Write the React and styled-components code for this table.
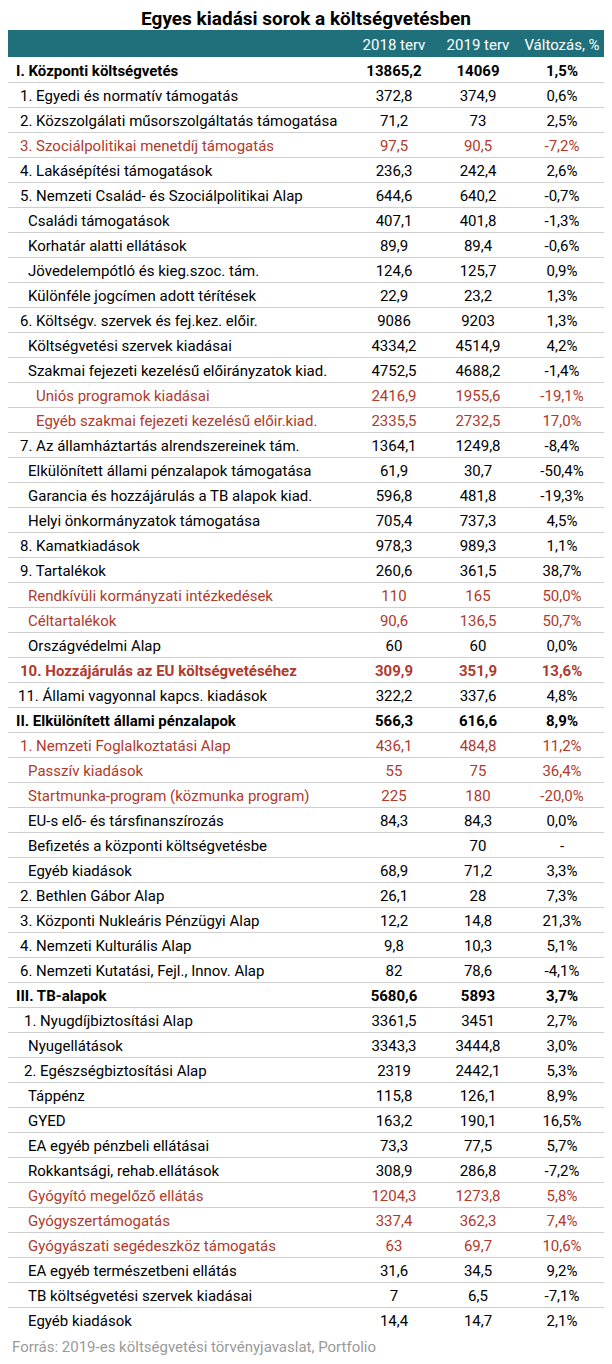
import React from 'react';
import styled, { createGlobalStyle } from 'styled-components';

const COLORS = {
  TEAL: '#20707b',
  RED: '#b03a2c',
  LINE: '#cfcfcf',
  GREY: '#9a9a9a',
};

// label, 2018, 2019, change, indent, variant (b = bold, r = red, rb = red bold)
const ROWS = [
  ['I. Központi költségvetés', '13865,2', '14069', '1,5%', 0, 'b'],
  ['1. Egyedi és normatív támogatás', '372,8', '374,9', '0,6%', 4],
  ['2. Közszolgálati műsorszolgáltatás támogatása', '71,2', '73', '2,5%', 4],
  ['3. Szociálpolitikai menetdíj támogatás', '97,5', '90,5', '-7,2%', 4, 'r'],
  ['4. Lakásépítési támogatások', '236,3', '242,4', '2,6%', 4],
  ['5. Nemzeti Család- és Szociálpolitikai Alap', '644,6', '640,2', '-0,7%', 4],
  ['Családi támogatások', '407,1', '401,8', '-1,3%', 12],
  ['Korhatár alatti ellátások', '89,9', '89,4', '-0,6%', 12],
  ['Jövedelempótló és kieg.szoc. tám.', '124,6', '125,7', '0,9%', 12],
  ['Különféle jogcímen adott térítések', '22,9', '23,2', '1,3%', 12],
  ['6. Költségv. szervek és fej.kez. előir.', '9086', '9203', '1,3%', 4],
  ['Költségvetési szervek kiadásai', '4334,2', '4514,9', '4,2%', 12],
  ['Szakmai fejezeti kezelésű előirányzatok kiad.', '4752,5', '4688,2', '-1,4%', 12],
  ['Uniós programok kiadásai', '2416,9', '1955,6', '-19,1%', 20, 'r'],
  ['Egyéb szakmai fejezeti kezelésű előir.kiad.', '2335,5', '2732,5', '17,0%', 20, 'r'],
  ['7. Az államháztartás alrendszereinek tám.', '1364,1', '1249,8', '-8,4%', 4],
  ['Elkülönített állami pénzalapok támogatása', '61,9', '30,7', '-50,4%', 12],
  ['Garancia és hozzájárulás a TB alapok kiad.', '596,8', '481,8', '-19,3%', 12],
  ['Helyi önkormányzatok támogatása', '705,4', '737,3', '4,5%', 12],
  ['8. Kamatkiadások', '978,3', '989,3', '1,1%', 4],
  ['9. Tartalékok', '260,6', '361,5', '38,7%', 4],
  ['Rendkívüli kormányzati intézkedések', '110', '165', '50,0%', 12, 'r'],
  ['Céltartalékok', '90,6', '136,5', '50,7%', 12, 'r'],
  ['Országvédelmi Alap', '60', '60', '0,0%', 12],
  ['10. Hozzájárulás az EU költségvetéséhez', '309,9', '351,9', '13,6%', 4, 'rb'],
  ['11. Állami vagyonnal kapcs. kiadások', '322,2', '337,6', '4,8%', 2],
  ['II. Elkülönített állami pénzalapok', '566,3', '616,6', '8,9%', 0, 'b'],
  ['1. Nemzeti Foglalkoztatási Alap', '436,1', '484,8', '11,2%', 4, 'r'],
  ['Passzív kiadások', '55', '75', '36,4%', 12, 'r'],
  ['Startmunka-program (közmunka program)', '225', '180', '-20,0%', 12, 'r'],
  ['EU-s elő- és társfinanszírozás', '84,3', '84,3', '0,0%', 12],
  ['Befizetés a központi költségvetésbe', '', '70', '-', 12],
  ['Egyéb kiadások', '68,9', '71,2', '3,3%', 12],
  ['2. Bethlen Gábor Alap', '26,1', '28', '7,3%', 4],
  ['3. Központi Nukleáris Pénzügyi Alap', '12,2', '14,8', '21,3%', 4],
  ['4. Nemzeti Kulturális Alap', '9,8', '10,3', '5,1%', 4],
  ['6. Nemzeti Kutatási, Fejl., Innov. Alap', '82', '78,6', '-4,1%', 4],
  ['III. TB-alapok', '5680,6', '5893', '3,7%', 0, 'b'],
  ['1. Nyugdíjbiztosítási Alap', '3361,5', '3451', '2,7%', 8],
  ['Nyugellátások', '3343,3', '3444,8', '3,0%', 12],
  ['2. Egészségbiztosítási Alap', '2319', '2442,1', '5,3%', 8],
  ['Táppénz', '115,8', '126,1', '8,9%', 12],
  ['GYED', '163,2', '190,1', '16,5%', 12],
  ['EA egyéb pénzbeli ellátásai', '73,3', '77,5', '5,7%', 12],
  ['Rokkantsági, rehab.ellátások', '308,9', '286,8', '-7,2%', 12],
  ['Gyógyító megelőző ellátás', '1204,3', '1273,8', '5,8%', 12, 'r'],
  ['Gyógyszertámogatás', '337,4', '362,3', '7,4%', 12, 'r'],
  ['Gyógyászati segédeszköz támogatás', '63', '69,7', '10,6%', 12, 'r'],
  ['EA egyéb természetbeni ellátás', '31,6', '34,5', '9,2%', 12],
  ['TB költségvetési szervek kiadásai', '7', '6,5', '-7,1%', 12],
  ['Egyéb kiadások', '14,4', '14,7', '2,1%', 12],
];

const GlobalStyle = createGlobalStyle`
  body {
    margin: 0;
    background: #fff;
    font-family: Roboto, "Liberation Sans", sans-serif;
    color: #000;
  }
`;

const App = () => (
  <Page>
    <GlobalStyle />
    <Title>Egyes kiadási sorok a költségvetésben</Title>
    <Table>
      <colgroup>
        <col />
        <col style={{ width: 84 }} />
        <col style={{ width: 84 }} />
        <col style={{ width: 84 }} />
      </colgroup>
      <thead>
        <tr>
          <HeadCell />
          <HeadCell>2018 terv</HeadCell>
          <HeadCell>2019 terv</HeadCell>
          <HeadCell>Változás, %</HeadCell>
        </tr>
      </thead>
      <tbody>
        {ROWS.map(([label, a, b, c, indent, variant], i) => (
          <Row key={i} $variant={variant}>
            <Label $indent={indent}>{label}</Label>
            <Num>{a}</Num>
            <Num>{b}</Num>
            <Num>{c}</Num>
          </Row>
        ))}
      </tbody>
    </Table>
    <Source>Forrás: 2019-es költségvetési törvényjavaslat, Portfolio</Source>
  </Page>
);

export default App;

const Page = styled.div`
  width: 596px;
  padding: 0 8px;
`;

const Title = styled.h1`
  margin: 0;
  height: 30px;
  line-height: 37px;
  text-align: center;
  font-size: 19px;
  font-weight: 700;
`;

const Table = styled.table`
  width: 596px;
  border-collapse: collapse;
  table-layout: fixed;
  font-size: 15px;
`;

const HeadCell = styled.th`
  height: 25px;
  padding: 2px 0 0;
  background: ${COLORS.TEAL};
  color: #fff;
  font-weight: 400;
  text-align: center;
  white-space: nowrap;
`;

const Row = styled.tr`
  height: 25px;
  color: ${p => (p.$variant === 'r' || p.$variant === 'rb' ? COLORS.RED : '#000')};
  font-weight: ${p => (p.$variant === 'b' || p.$variant === 'rb' ? 700 : 400)};
  border-bottom: 1px solid ${COLORS.LINE};
  &:last-child {
    border-bottom: none;
  }
`;

const Label = styled.td`
  padding: 3px 0 0 ${p => 8 + p.$indent}px;
  white-space: nowrap;
  overflow: visible;
`;

const Num = styled.td`
  padding: 3px 0 0;
  text-align: center;
  white-space: nowrap;
`;

const Source = styled.div`
  padding: 6px 0 0 4px;
  font-size: 15px;
  color: ${COLORS.GREY};
`;
